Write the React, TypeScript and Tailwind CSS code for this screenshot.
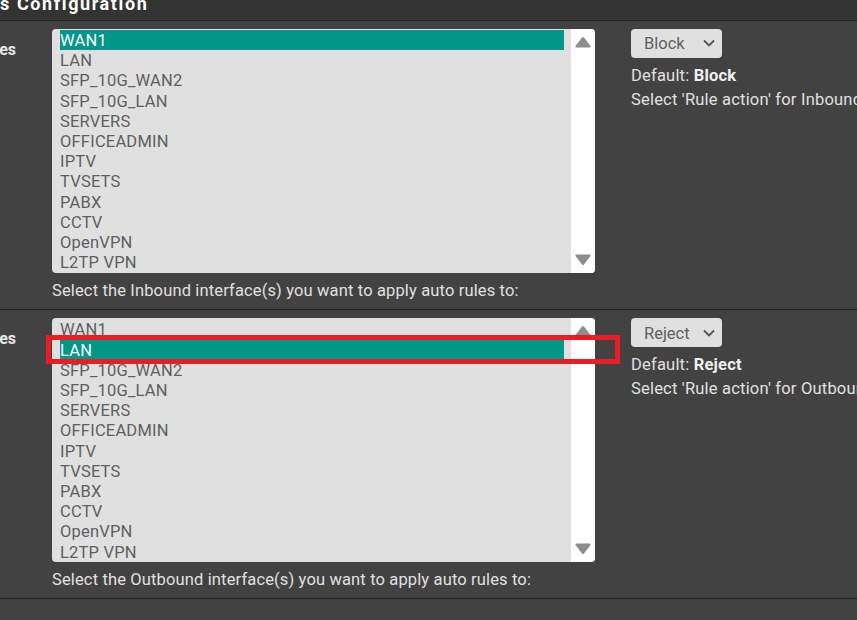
const items = ["WAN1","LAN","SFP_10G_WAN2","SFP_10G_LAN","SERVERS","OFFICEADMIN","IPTV","TVSETS","PABX","CCTV","OpenVPN","L2TP VPN"];

function ListBox({ selected }: { selected: number }) {
  return (
    <div className="relative flex h-[243.6px] w-[543px] overflow-hidden rounded-[4px] bg-[#e0e0e0]">
      <div className="flex-1 pl-2 pr-[7px] pt-px">
        {items.map((t, i) => (
          <div key={t} className={`h-[20.2px] pt-px text-[16.5px] leading-[19.2px] tracking-[0.2px] ${i === selected ? "bg-[#009688] text-white" : "text-[#5f5f5f]"}`}>{t}</div>
        ))}
      </div>
      <div className="flex w-[24px] flex-col items-center justify-between bg-white py-[7px]">
        <svg width="16" height="12" viewBox="0 0 16 12"><path d="M7 1.4 Q8 0.4 9 1.4 L15.5 10 Q16 11.5 14.5 11.5 H1.5 Q0 11.5 0.5 10 Z" fill="#8c8c8c" /></svg>
        <svg width="16" height="12" viewBox="0 0 16 12"><path d="M1.5 0.5 H14.5 Q16 0.5 15.5 2 L9 10.6 Q8 11.6 7 10.6 L0.5 2 Q0 0.5 1.5 0.5 Z" fill="#8c8c8c" /></svg>
      </div>
    </div>
  );
}

function Row({ selected, action, dir, top, bottom }: { selected: number; action: string; dir: string; top: string; bottom: string }) {
  return (
    <div className={`flex border-b border-[#222222] ${top} ${bottom}`}>
      <div className="flex w-[52px] shrink-0 pt-[11px]">
        <div className="flex w-[16px] justify-end overflow-hidden whitespace-nowrap text-[16px] font-bold leading-5 text-[#e8e8e8]">es</div>
      </div>
      <div className="w-[543px] shrink-0">
        <ListBox selected={selected} />
        <div className="mt-[8.4px] h-5 whitespace-nowrap text-[16.5px] leading-5 tracking-[0.14px] text-[#e0e0e0]">Select the {dir} interface(s) you want to apply auto rules to:</div>
      </div>
      <div className="ml-[36px] min-w-0 flex-1 overflow-hidden whitespace-nowrap text-[16.5px] tracking-[0.2px] text-[#e0e0e0]">
        <div className="flex h-[28.6px] w-[91px] items-center justify-between rounded-[4px] bg-[#e0e0e0] pl-[13px] pr-[6px] text-[#5f5f5f]">
          <span className="pt-[3px] tracking-[0px]">{action}</span>
          <svg width="14" height="14" viewBox="0 0 14 14" fill="none" stroke="#555555" strokeWidth="1.8"><path d="M2 4.5 L7 9.5 L12 4.5" /></svg>
        </div>
        <div className="mt-[6.4px] h-6 leading-6">Default: <b className="font-bold text-[#f0f0f0]">{action}</b></div>
        <div className="h-6 leading-6">Select 'Rule action' for {dir} rules that do not match any rule</div>
      </div>
    </div>
  );
}

export default function App() {
  return (
    <div className="relative h-[620px] w-[857px] overflow-hidden bg-[#424242] font-['Roboto',sans-serif]">
      <div className="flex h-[21px] items-end overflow-hidden border-b border-[#222222] bg-[#333333] pb-[6px]">
        <div className="whitespace-nowrap text-[18px] font-bold leading-5 tracking-[1.6px] text-white">s Configuration</div>
      </div>
      <Row selected={0} action="Block" dir="Inbound" top="pt-2" bottom="pb-[8px]" />
      <Row selected={1} action="Reject" dir="Outbound" top="pt-[8.5px]" bottom="pb-[7.5px]" />
      <div className="absolute left-[46px] top-[335px] h-[29px] w-[574px] border-[5px] border-[#ed1c24]" />
    </div>
  );
}
